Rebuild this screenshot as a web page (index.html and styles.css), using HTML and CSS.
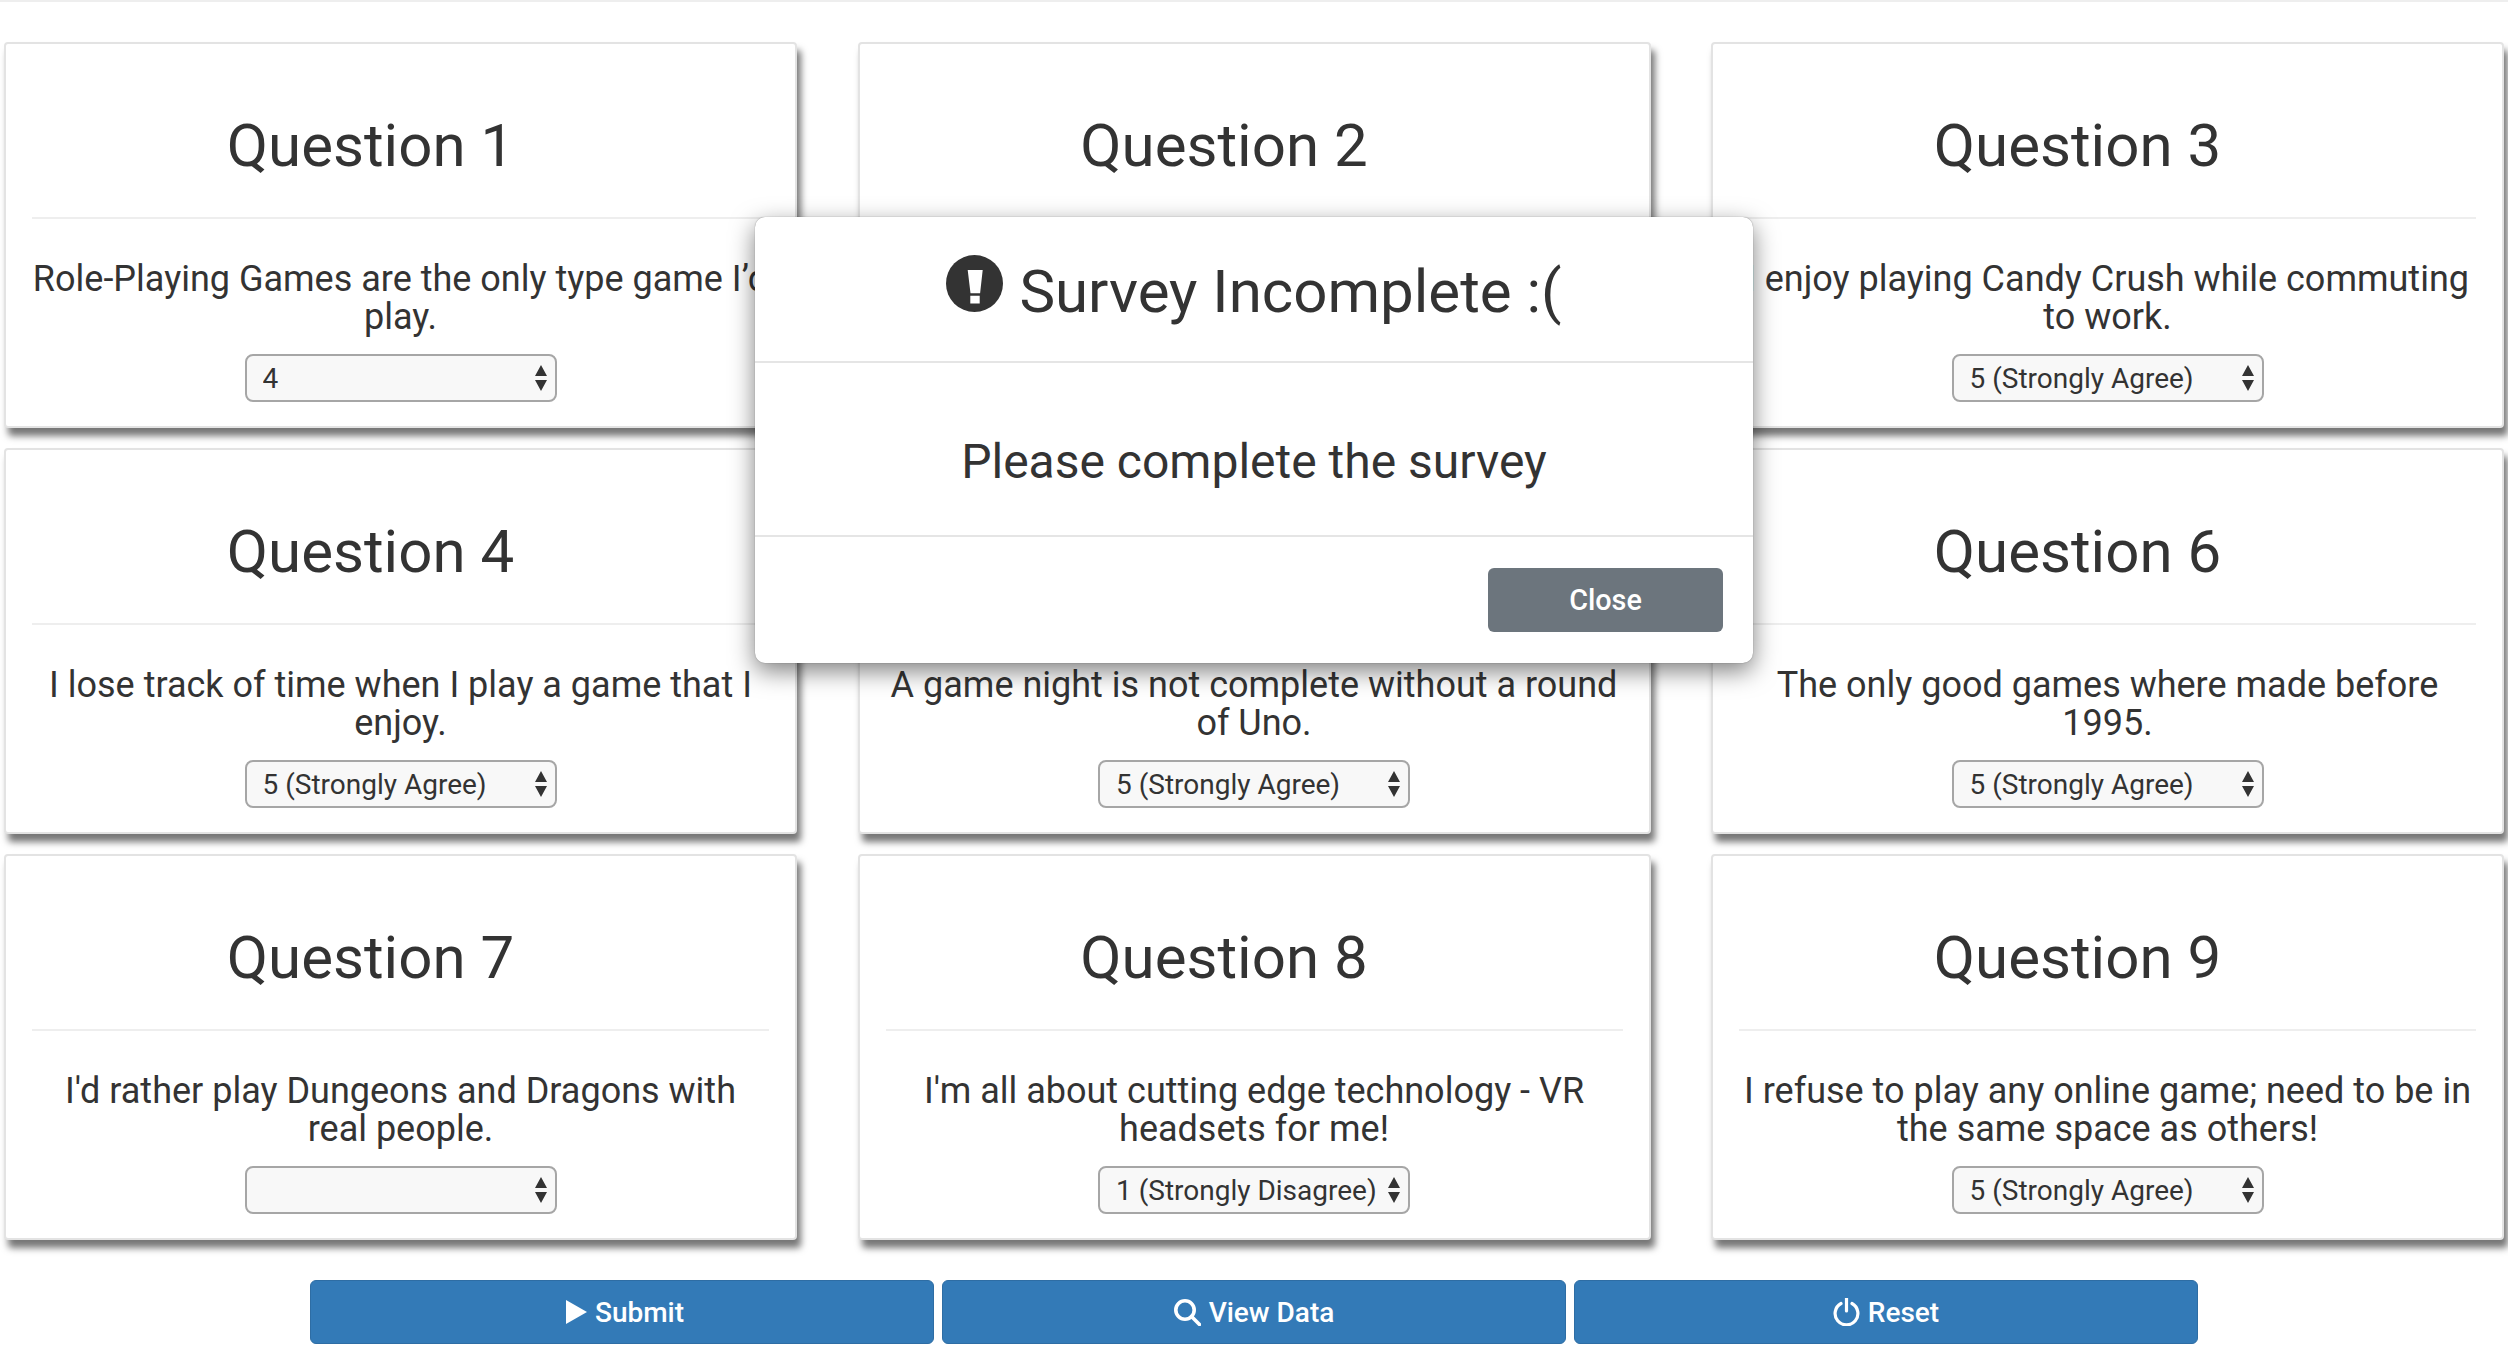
FILE: index.html
```html
<!DOCTYPE html>
<html lang="en">
<head>
    <meta charset="UTF-8">
    <title>Survey</title>
    <link rel="stylesheet" href="styles.css">
</head>
<body>
    <div class="page">
        <div class="questions">
            <div class="card">
                <h1 class="card-title">Question 1</h1>
                <hr class="card-rule">
                <h3 class="card-text">Role-Playing Games are the only type game I’d play.</h3>
                <div class="picker">
                    <select class="picker-select"><option></option><option>1 (Strongly Disagree)</option><option>2</option><option>3</option><option selected>4</option><option>5 (Strongly Agree)</option></select>
                    <svg class="picker-arrows" viewBox="0 0 14 26"><path d="M7 0l6 11H1zM1 15h12L7 26z"/></svg>
                </div>
            </div>
            <div class="card">
                <h1 class="card-title">Question 2</h1>
                <hr class="card-rule">
                <h3 class="card-text">I enjoy games with a good story and memorable characters.</h3>
                <div class="picker">
                    <select class="picker-select"><option></option><option>1 (Strongly Disagree)</option><option>2</option><option>3</option><option>4</option><option selected>5 (Strongly Agree)</option></select>
                    <svg class="picker-arrows" viewBox="0 0 14 26"><path d="M7 0l6 11H1zM1 15h12L7 26z"/></svg>
                </div>
            </div>
            <div class="card">
                <h1 class="card-title">Question 3</h1>
                <hr class="card-rule">
                <h3 class="card-text">I enjoy playing Candy Crush while commuting to work.</h3>
                <div class="picker">
                    <select class="picker-select"><option></option><option>1 (Strongly Disagree)</option><option>2</option><option>3</option><option>4</option><option selected>5 (Strongly Agree)</option></select>
                    <svg class="picker-arrows" viewBox="0 0 14 26"><path d="M7 0l6 11H1zM1 15h12L7 26z"/></svg>
                </div>
            </div>
            <div class="card">
                <h1 class="card-title">Question 4</h1>
                <hr class="card-rule">
                <h3 class="card-text">I lose track of time when I play a game that I enjoy.</h3>
                <div class="picker">
                    <select class="picker-select"><option></option><option>1 (Strongly Disagree)</option><option>2</option><option>3</option><option>4</option><option selected>5 (Strongly Agree)</option></select>
                    <svg class="picker-arrows" viewBox="0 0 14 26"><path d="M7 0l6 11H1zM1 15h12L7 26z"/></svg>
                </div>
            </div>
            <div class="card">
                <h1 class="card-title">Question 5</h1>
                <hr class="card-rule">
                <h3 class="card-text">A game night is not complete without a round of Uno.</h3>
                <div class="picker">
                    <select class="picker-select"><option></option><option>1 (Strongly Disagree)</option><option>2</option><option>3</option><option>4</option><option selected>5 (Strongly Agree)</option></select>
                    <svg class="picker-arrows" viewBox="0 0 14 26"><path d="M7 0l6 11H1zM1 15h12L7 26z"/></svg>
                </div>
            </div>
            <div class="card">
                <h1 class="card-title">Question 6</h1>
                <hr class="card-rule">
                <h3 class="card-text">The only good games where made before 1995.</h3>
                <div class="picker">
                    <select class="picker-select"><option></option><option>1 (Strongly Disagree)</option><option>2</option><option>3</option><option>4</option><option selected>5 (Strongly Agree)</option></select>
                    <svg class="picker-arrows" viewBox="0 0 14 26"><path d="M7 0l6 11H1zM1 15h12L7 26z"/></svg>
                </div>
            </div>
            <div class="card">
                <h1 class="card-title">Question 7</h1>
                <hr class="card-rule">
                <h3 class="card-text">I'd rather play Dungeons and Dragons with<br>real people.</h3>
                <div class="picker">
                    <select class="picker-select"><option selected></option><option>1 (Strongly Disagree)</option><option>2</option><option>3</option><option>4</option><option>5 (Strongly Agree)</option></select>
                    <svg class="picker-arrows" viewBox="0 0 14 26"><path d="M7 0l6 11H1zM1 15h12L7 26z"/></svg>
                </div>
            </div>
            <div class="card">
                <h1 class="card-title">Question 8</h1>
                <hr class="card-rule">
                <h3 class="card-text">I'm all about cutting edge technology - VR headsets for me!</h3>
                <div class="picker">
                    <select class="picker-select"><option></option><option selected>1 (Strongly Disagree)</option><option>2</option><option>3</option><option>4</option><option>5 (Strongly Agree)</option></select>
                    <svg class="picker-arrows" viewBox="0 0 14 26"><path d="M7 0l6 11H1zM1 15h12L7 26z"/></svg>
                </div>
            </div>
            <div class="card">
                <h1 class="card-title">Question 9</h1>
                <hr class="card-rule">
                <h3 class="card-text">I refuse to play any online game; need to be in the same space as others!</h3>
                <div class="picker">
                    <select class="picker-select"><option></option><option>1 (Strongly Disagree)</option><option>2</option><option>3</option><option>4</option><option selected>5 (Strongly Agree)</option></select>
                    <svg class="picker-arrows" viewBox="0 0 14 26"><path d="M7 0l6 11H1zM1 15h12L7 26z"/></svg>
                </div>
            </div>
        </div>
        <div class="actions">
            <button class="action">
                <svg class="icon-play" viewBox="0 0 21 24"><path d="M0 0l21 12L0 24z"/></svg>
                Submit
            </button>
            <button class="action">
                <svg class="icon-search" viewBox="0 0 27 27"><circle cx="11" cy="11" r="9.2"/><path d="M17.5 17.5l8 8"/></svg>
                View Data
            </button>
            <button class="action">
                <svg class="icon-power" viewBox="0 0 27 28"><path d="M8 5.5a11.4 11.4 0 1 0 11 0"/><path d="M13.5 0v13"/></svg>
                Reset
            </button>
        </div>
    </div>
    <div class="dialog">
        <div class="dialog-header">
            <svg class="icon-alert" viewBox="0 0 57 57"><circle cx="28.5" cy="28.5" r="28.5"/><path class="bang" d="M21.7 15h15l-2.6 23.3h-9.6zM24.3 40.7h9.4v7.7h-9.4z"/></svg>
            <h1 class="dialog-title">Survey Incomplete :(</h1>
        </div>
        <div class="dialog-body">Please complete the survey</div>
        <div class="dialog-footer">
            <button class="close">Close</button>
        </div>
    </div>
</body>
</html>
```

FILE: styles.css
```css
html, body {
    margin: 0;
    height: 100%;
    overflow: hidden;
}
body {
    background-color: #fff;
    color: #333;
    font-family: Roboto, sans-serif;
    position: relative;
}
.page {
    border-top: 2px solid #eee;
    padding: 40px 0 0 4px;
}
.questions {
    display: grid;
    grid-template-columns: repeat(3, 793px);
    grid-auto-rows: 386px;
    column-gap: 60.5px;
    row-gap: 20px;
}
.card {
    box-sizing: border-box;
    background-color: #fff;
    border: 2px solid #e3e3e3;
    border-radius: 4px;
    box-shadow: 4px 8px 7px #777;
    display: flex;
    flex-direction: column;
    align-items: center;
}
.card-title {
    align-self: stretch;
    margin: 0;
    height: 173px;
    line-height: 203px;
    box-sizing: border-box;
    padding-right: 60px;
    font-size: 60px;
    font-weight: 400;
    text-align: center;
}
.card-rule {
    align-self: stretch;
    margin: 0 26px;
    border: 0;
    border-top: 2px solid #eee;
}
.card-text {
    margin: 41px 0 0;
    padding: 0 24px;
    height: 78px;
    font-size: 36px;
    font-weight: 400;
    line-height: 38.4px;
    text-align: center;
}
.picker {
    position: relative;
    margin-top: 16px;
    width: 312px;
    height: 48px;
}
.picker-select {
    appearance: none;
    -webkit-appearance: none;
    width: 100%;
    height: 100%;
    padding: 0 0 0 16px;
    background-color: #f8f8f8;
    border: 2px solid #a6a6a6;
    border-radius: 8px;
    color: #333;
    font-family: Roboto, sans-serif;
    font-size: 28px;
}
.picker-arrows {
    position: absolute;
    right: 9px;
    top: 11px;
    width: 14px;
    height: 26px;
    fill: #333;
}
.actions {
    display: flex;
    justify-content: center;
    gap: 8px;
    margin-top: 40px;
    padding-right: 4px;
}
.action {
    width: 624px;
    height: 64px;
    background-color: #337ab7;
    border: 1px solid #2e6da4;
    border-radius: 6px;
    color: #fff;
    font-family: Roboto, sans-serif;
    font-size: 28px;
    font-weight: 500;
    display: flex;
    align-items: center;
    justify-content: center;
    gap: 8px;
}
.icon-play {
    width: 21px;
    height: 24px;
    margin-left: 6px;
    fill: #fff;
}
.icon-search {
    width: 27px;
    height: 27px;
    fill: none;
    stroke: #fff;
    stroke-width: 3.6;
    stroke-linecap: round;
}
.icon-power {
    width: 27px;
    height: 28px;
    fill: none;
    stroke: #fff;
    stroke-width: 3.2;
    stroke-linecap: round;
}
.dialog {
    position: absolute;
    left: 755px;
    top: 217px;
    width: 998px;
    height: 446px;
    box-sizing: border-box;
    background-color: #fff;
    border-radius: 10px;
    box-shadow: 0 0 1px rgba(0, 0, 0, 0.5), 0 8px 24px rgba(0, 0, 0, 0.5);
    display: flex;
    flex-direction: column;
}
.dialog-header {
    height: 146px;
    flex: none;
    box-sizing: border-box;
    border-bottom: 2px solid #e5e5e5;
    display: flex;
    justify-content: center;
    gap: 16px;
    padding-top: 38px;
}
.icon-alert {
    width: 57px;
    height: 57px;
    fill: #333;
}
.bang {
    fill: #fff;
}
.dialog-title {
    margin: 0;
    font-size: 60px;
    font-weight: 400;
    line-height: 74px;
}
.dialog-body {
    height: 174px;
    flex: none;
    box-sizing: border-box;
    padding-top: 24px;
    border-bottom: 2px solid #e5e5e5;
    display: flex;
    align-items: center;
    justify-content: center;
    font-size: 48px;
}
.dialog-footer {
    display: flex;
    justify-content: flex-end;
    padding: 31px 30px 0 0;
}
.close {
    width: 235px;
    height: 64px;
    background-color: #6c757d;
    border: 0;
    border-radius: 6px;
    color: #fff;
    font-family: Roboto, sans-serif;
    font-size: 28.8px;
    font-weight: 500;
}
```
